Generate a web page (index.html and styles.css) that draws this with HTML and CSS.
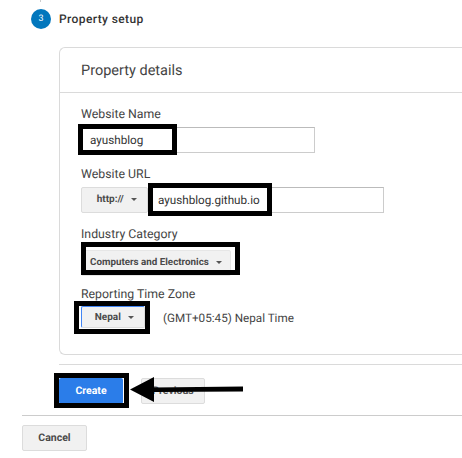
FILE: index.html
```html
<!DOCTYPE html>
<html>
<head>
    <title>Property setup</title>
    <link rel="stylesheet" href="styles.css">
</head>
<body>
    <div class="page">
        <div class="step-line"></div>
        <div class="step">
            <div class="step-num">3</div>
            <div class="step-title">Property setup</div>
        </div>

        <div class="card">
            <div class="card-head">Property details</div>
            <div class="card-body">
                <div class="field">
                    <div class="label">Website Name</div>
                    <div class="input input-name">ayushblog</div>
                </div>
                <div class="field">
                    <div class="label">Website URL</div>
                    <div class="row">
                        <div class="btn btn-http">http:// <span class="caret"></span></div>
                        <div class="input input-url">ayushblog.github.io</div>
                    </div>
                </div>
                <div class="field">
                    <div class="label">Industry Category</div>
                    <div class="btn btn-industry">Computers and Electronics <span class="caret"></span></div>
                </div>
                <div class="field">
                    <div class="label">Reporting Time Zone</div>
                    <div class="row">
                        <div class="btn btn-zone">Nepal <span class="caret"></span></div>
                        <div class="zone-text">(GMT+05:45) Nepal Time</div>
                    </div>
                </div>
            </div>
        </div>

        <div class="actions">
            <div class="btn btn-create">Create</div>
            <div class="btn btn-prev">Previous</div>
        </div>
        <div class="footer">
            <div class="btn btn-cancel">Cancel</div>
        </div>

        <!-- black boxes and arrow drawn on top of the screenshot -->
        <div class="mark mark-name"></div>
        <div class="mark mark-url"></div>
        <div class="mark mark-industry"></div>
        <div class="mark mark-zone"></div>
        <div class="mark mark-create"></div>
        <svg class="arrow" width="116" height="28" viewBox="0 0 116 28">
            <path d="M113 10.500L24 11.500V1L0 13.500L24 26V16L113 15.500Z" fill="#000"/>
        </svg>
    </div>
</body>
</html>
```

FILE: styles.css
```css
body {
    margin: 0;
    background-color: #fff;
    font-family: Roboto, "Liberation Sans", sans-serif;
    color: #333;
    text-rendering: geometricPrecision;
}

.page {
    position: relative;
    width: 462px;
    height: 458px;
    overflow: hidden;
}

.step-line {
    width: 1px;
    height: 2px;
    margin-left: 40px;
    background-color: #ccc;
}

.step {
    display: flex;
    align-items: center;
    gap: 8px;
    height: 20px;
    margin-top: 7px;
    margin-left: 31px;
}

.step-num {
    width: 20px;
    height: 20px;
    border-radius: 50%;
    background-color: #0277bd;
    color: #fff;
    font-size: 9px;
    line-height: 20px;
    text-align: center;
}

.step-title {
    font-size: 12px;
    font-weight: 500;
    letter-spacing: 0.4px;
    color: #333;
}

.card {
    width: 420px;
    height: 306px;
    margin-top: 18px;
    margin-left: 59px;
    border: 1px solid #dadada;
    border-right: 0;
    border-radius: 6px 0 0 6px;
    box-sizing: content-box;
}

.card-head {
    height: 44px;
    padding-left: 21px;
    border-bottom: 1px solid #dadada;
    font-size: 14.500px;
    line-height: 45px;
    color: #444;
}

.card-body {
    padding-left: 21px;
    padding-top: 14px;
}

.field {
    height: 60px;
}

.label {
    height: 20px;
    font-size: 12.300px;
    line-height: 16px;
    color: #444;
}

.row {
    display: flex;
    align-items: center;
}

.input {
    box-sizing: border-box;
    height: 26px;
    border: 1px solid #ccc;
    border-top-color: #bbb;
    font-size: 11.700px;
    line-height: 25px;
    color: #333;
}

.input-name {
    width: 234px;
    padding-left: 8px;
}

.input-url {
    width: 236px;
    padding-left: 9px;
}

.btn {
    box-sizing: border-box;
    height: 26px;
    border: 1px solid #dcdcdc;
    border-radius: 2px;
    background-color: #f1f1f1;
    font-size: 10px;
    font-weight: 700;
    line-height: 24px;
    text-align: center;
    color: #4a4a4a;
}

.caret {
    display: inline-block;
    width: 0;
    height: 0;
    margin-left: 5px;
    vertical-align: middle;
    border-left: 3px solid transparent;
    border-right: 3px solid transparent;
    border-top: 3.500px solid #555;
}

.btn-http {
    width: 67px;
    padding-left: 5px;
}

.btn-industry {
    width: 150px;
    margin-top: 3px;
    text-align: left;
    padding-left: 8px;
    font-size: 9.800px;
    white-space: nowrap;
    border-color: #e6e6e6;
}

.btn-zone {
    width: 64px;
    height: 22px;
    line-height: 22px;
    margin-top: -1px;
    padding-left: 3px;
    border-top-color: #4285f4;
    border-left-color: #4285f4;
}

.zone-text {
    margin-left: 18px;
    font-size: 11.700px;
    color: #444;
}

.actions {
    display: flex;
    gap: 18px;
    width: 403px;
    height: 51px;
    box-sizing: border-box;
    margin-left: 59px;
    margin-top: 9px;
    padding-top: 13px;
    border-top: 1px solid #dadada;
}

.btn-create {
    width: 64px;
    border: 0;
    background-color: #2b7de9;
    color: #fff;
    font-size: 10.500px;
    line-height: 26px;
}

.btn-prev {
    width: 64px;
    color: #555;
    font-size: 10.500px;
}

.footer {
    box-sizing: border-box;
    margin-left: 22px;
    padding-top: 9px;
    border-top: 1px solid #ccc;
}

.btn-cancel {
    width: 65px;
    font-size: 10.500px;
}

.mark {
    position: absolute;
    box-sizing: border-box;
    border: 5px solid #000;
}

.mark-name {
    left: 78px;
    top: 124px;
    width: 99px;
    height: 31px;
}

.mark-url {
    left: 148px;
    top: 183px;
    width: 124px;
    height: 33px;
}

.mark-industry {
    left: 81px;
    top: 242px;
    width: 159px;
    height: 33px;
}

.mark-zone {
    left: 74px;
    top: 301px;
    width: 76px;
    height: 33px;
}

.mark-create {
    left: 54px;
    top: 373px;
    width: 75px;
    height: 35px;
}

.arrow {
    position: absolute;
    left: 130px;
    top: 376px;
}
```
